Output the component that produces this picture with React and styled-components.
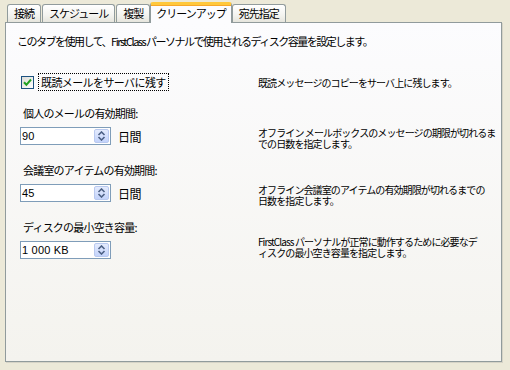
import React from "react";
import styled, { createGlobalStyle, css } from "styled-components";

const Global = createGlobalStyle`
  html, body { margin: 0; padding: 0; background: #ECE9D8; }
  body {
    font-family: "Noto Sans CJK JP", "Noto Sans", sans-serif;
    font-size: 11px;
    color: #000;
  }
`;

const Window = styled.div`
  width: 510px;
  height: 370px;
  box-sizing: border-box;
  padding-top: 2px;
  background: #ECE9D8;
`;

const TabStrip = styled.div`
  display: flex;
  align-items: flex-end;
  height: 20px;
  padding-left: 7px;
`;

const Tab = styled.div`
  box-sizing: border-box;
  height: 18px;
  padding: 0 6px;
  margin-right: 1px;
  border: 1px solid #919B9C;
  border-bottom: none;
  border-radius: 3px 3px 0 0;
  background: linear-gradient(#FFFFFF, #F3F3EF 60%, #E6E5DD);
  font-size: 11px;
  line-height: 16px;
  letter-spacing: -1px;
  white-space: nowrap;
  ${(p) =>
    p.$active &&
    css`
      position: relative;
      z-index: 1;
      height: 21px;
      margin: 0 0 -1px -1px;
      padding: 0 5px;
      border-top: 3px solid #FFC83C;
      border-radius: 3px 3px 0 0;
      box-shadow: inset 0 1px 0 #F7A728;
      background: #FCFCFE;
      line-height: 16px;
    `}
`;

const Panel = styled.div`
  box-sizing: border-box;
  margin-left: 5px;
  width: 497px;
  height: 340px;
  border: 1px solid #919B9C;
  box-shadow: 1px 1px 0 #D6D3C6;
  background: linear-gradient(#FCFCFE, #F4F3EE);
  padding: 12px 0 0 11px;
`;

const Intro = styled.div`
  line-height: 12px;
  font-size: 11px;
  letter-spacing: -1.5px;
  white-space: nowrap;
`;

const Row = styled.div`
  display: grid;
  grid-template-columns: 241px 1fr;
  margin-top: ${(p) => p.$top}px;
`;

const CheckCell = styled.div`
  display: flex;
  align-items: center;
  padding-left: 4px;
  gap: 4px;
  height: 18px;
`;

const CheckBox = styled.span`
  box-sizing: border-box;
  width: 13px;
  height: 13px;
  border: 1px solid #1C5180;
  background: linear-gradient(135deg, #DCDCD7, #FFFFFF);
  display: flex;
  align-items: center;
  justify-content: center;
`;

const FocusLabel = styled.span`
  box-sizing: border-box;
  height: 18px;
  padding: 0 2px;
  border: 1px dotted #000;
  line-height: 16px;
  font-size: 11px;
  letter-spacing: -0.6px;
  white-space: nowrap;
`;

const Desc = styled.div`
  font-size: 10px;
  line-height: 11px;
  letter-spacing: -0.9px;
  white-space: nowrap;
  align-self: ${(p) => (p.$center ? "center" : "start")};
  margin-top: ${(p) => p.$shift || 0}px;
`;

const Field = styled.div`
  display: flex;
  flex-direction: column;
  gap: 8px;
`;

const FieldLabel = styled.div`
  padding-left: 6px;
  line-height: 12px;
  font-size: 11px;
  letter-spacing: -0.8px;
  white-space: nowrap;
`;

const SpinRow = styled.div`
  display: flex;
  align-items: center;
  gap: 7px;
  padding-left: 3px;
`;

const Spin = styled.div`
  box-sizing: border-box;
  width: 91px;
  height: 18px;
  border: 1px solid #7F9DB9;
  background: #fff;
  display: flex;
  align-items: center;
  justify-content: space-between;
  padding: 0 1px 0 1px;
`;

const SpinValue = styled.span`
  font-family: "Liberation Sans", Arial, sans-serif;
  font-size: 11px;
  line-height: 14px;
  letter-spacing: 0.2px;
`;

const SpinButton = styled.span`
  box-sizing: border-box;
  width: 15px;
  height: 14px;
  border: 1px solid #B9C9EF;
  border-radius: 2px;
  background: linear-gradient(#E4EBFD, #C3D3FB);
  display: flex;
  align-items: center;
  justify-content: center;
`;

const Unit = styled.span`
  font-size: 12px;
  letter-spacing: -0.5px;
`;

const Arrows = () => (
  <svg width="9" height="10" viewBox="0 0 9 10">
    <path d="M1.5 4 L4.5 1 L7.5 4" fill="none" stroke="#4D6185" strokeWidth="1.6" />
    <path d="M1.5 6 L4.5 9 L7.5 6" fill="none" stroke="#4D6185" strokeWidth="1.6" />
  </svg>
);

const Check = () => (
  <svg width="9" height="9" viewBox="0 0 9 9">
    <path d="M1 4.2 L3.4 6.8 L8 1.5" fill="none" stroke="#21A121" strokeWidth="2" />
  </svg>
);

const Spinner = ({ value, unit }) => (
  <SpinRow>
    <Spin>
      <SpinValue>{value}</SpinValue>
      <SpinButton>
        <Arrows />
      </SpinButton>
    </Spin>
    {unit && <Unit>{unit}</Unit>}
  </SpinRow>
);

const tabs = ["接続", "スケジュール", "複製", "クリーンアップ", "宛先指定"];

export default function App() {
  return (
    <>
      <Global />
      <Window>
        <TabStrip>
          {tabs.map((t, i) => (
            <Tab key={t} $active={i === 3}>
              {t}
            </Tab>
          ))}
        </TabStrip>
        <Panel>
          <Intro>このタブを使用して、FirstClass パーソナルで使用されるディスク容量を設定します。</Intro>
          <Row $top={26}>
            <CheckCell>
              <CheckBox>
                <Check />
              </CheckBox>
              <FocusLabel>既読メールをサーバに残す</FocusLabel>
            </CheckCell>
            <Desc $center>既読メッセージのコピーをサーバ上に残します。</Desc>
          </Row>
          <Row $top={16}>
            <Field>
              <FieldLabel>個人のメールの有効期間:</FieldLabel>
              <Spinner value="90" unit="日間" />
            </Field>
            <Desc $shift={20}>
              オフライン メールボックスのメッセージの期限が切れるま
              <br />
              での日数を指定します。
            </Desc>
          </Row>
          <Row $top={15}>
            <Field>
              <FieldLabel>会議室のアイテムの有効期間:</FieldLabel>
              <Spinner value="45" unit="日間" />
            </Field>
            <Desc $shift={20}>
              オフライン会議室のアイテムの有効期限が切れるまでの
              <br />
              日数を指定します。
            </Desc>
          </Row>
          <Row $top={15}>
            <Field>
              <FieldLabel>ディスクの最小空き容量:</FieldLabel>
              <Spinner value="1 000 KB" />
            </Field>
            <Desc $shift={15}>
              FirstClass パーソナルが正常に動作するために必要なデ
              <br />
              ィスクの最小空き容量を指定します。
            </Desc>
          </Row>
        </Panel>
      </Window>
    </>
  );
}
